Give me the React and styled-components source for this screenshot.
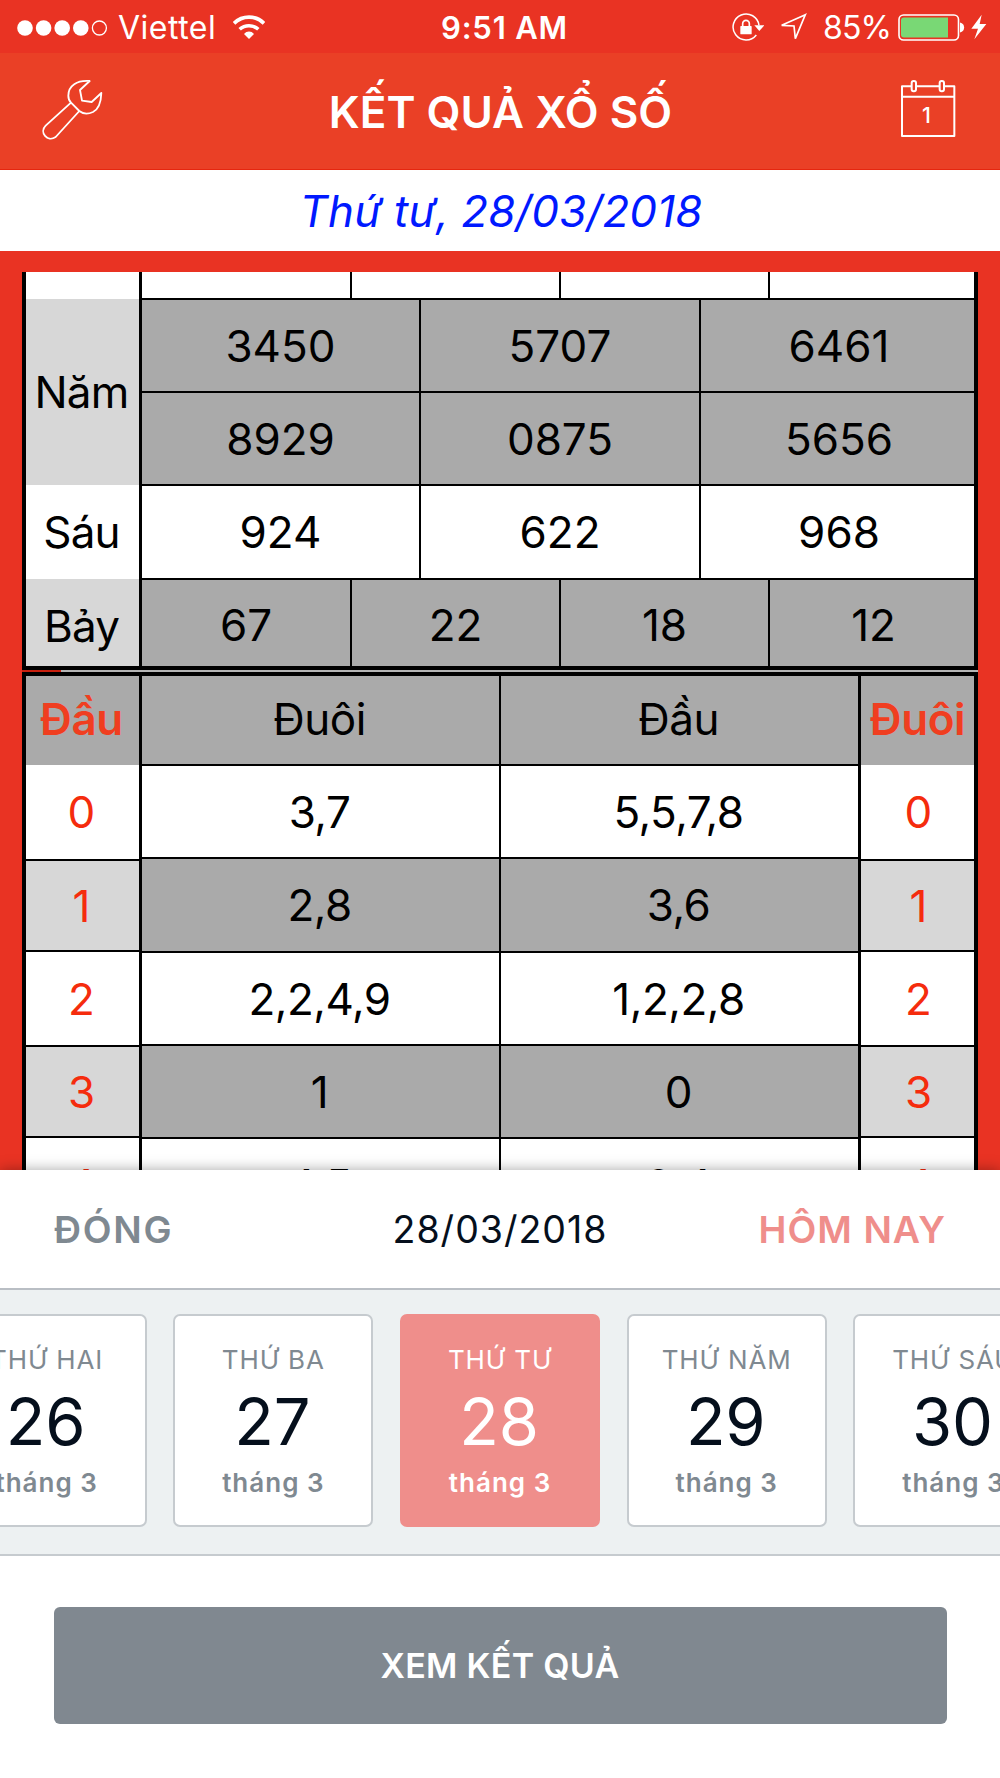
import React from "react";
import styled, { createGlobalStyle } from "styled-components";

const GlobalStyle = createGlobalStyle`
  * {
    box-sizing: border-box;
  }
  body {
    margin: 0;
    background-color: white;
    font-family: Inter, "Noto Sans", sans-serif;
    font-feature-settings: "calt" 0;
  }
`;

const Screen = styled.div`
  width: 1000px;
  height: 1778px;
  overflow: hidden;
  display: flex;
  flex-direction: column;
  background-color: #e93323;
`;

const StatusBar = styled.div`
  height: 53px;
  flex-shrink: 0;
  display: grid;
  grid-template-columns: 1fr auto 1fr;
  align-items: center;
  padding: 2px 13px 0 17px;
  font-size: 32px;
  line-height: 1;
  color: white;
  background-color: #e93323;
`;

const StatusGroup = styled.div`
  display: flex;
  align-items: center;
  justify-content: ${props => props.$align};
`;

const Carrier = styled.span`
  margin: 0 17px 0 10px;
  font-weight: 380;
  letter-spacing: 0.5px;
`;

const Time = styled.span`
  margin-left: 5px;
  font-size: 31px;
  font-weight: 600;
  letter-spacing: 0.8px;
`;

const Percent = styled.span`
  margin: 0 7px 0 16px;
  font-weight: 380;
  letter-spacing: -0.9px;
`;

const Icon = styled.svg`
  display: block;
  flex-shrink: 0;
  margin-left: ${props => props.$left || 0}px;
  margin-bottom: ${props => props.$bottom || 0}px;
`;

const NavBar = styled.div`
  height: 117px;
  flex-shrink: 0;
  display: flex;
  align-items: center;
  justify-content: space-between;
  padding: 0 44px 0 40px;
  color: white;
  background-color: #ea4026;
  border-bottom: 1px solid #e6260f;
`;

const Title = styled.h1`
  margin: 2px 3px 0 0;
  font-size: 44px;
  font-weight: 600;
  line-height: 1;
`;

const DateBar = styled.div`
  height: 81px;
  flex-shrink: 0;
  display: flex;
  align-items: center;
  justify-content: center;
  padding-left: 2px;
  font-size: 44px;
  font-style: italic;
  font-weight: 380;
  letter-spacing: 0.1px;
  color: #0019ff;
  background-color: white;
`;

const Results = styled.div`
  height: 919px;
  flex-shrink: 0;
  overflow: hidden;
  padding: 21px 22px 0;
  font-size: 44px;
  line-height: 1;
  color: black;
`;

const Prizes = styled.div`
  height: 398px;
  display: grid;
  grid-template-columns: 116px 1fr;
  border: solid black;
  border-width: 0 4px 4px;
`;

const Divider = styled.div`
  height: 2px;
  background-color: #b4b4b4;
  border-left: 39px solid #c8200f;
`;

const Heads = styled.div`
  height: 600px;
  display: grid;
  grid-template-columns: 116px 1fr 113px;
  border: 4px solid black;
`;

const Column = styled.div`
  display: flex;
  flex-direction: column;
  border-right: ${props => (props.$line ? "3px solid black" : "none")};
`;

const Label = styled.div`
  height: ${props => props.$height}px;
  flex-shrink: 0;
  display: flex;
  align-items: center;
  justify-content: center;
  letter-spacing: -0.8px;
  padding-top: ${props => props.$drop || 0}px;
  padding-right: 2px;
  background-color: ${props => (props.$shaded ? "#d7d7d7" : "white")};
`;

const Row = styled.div`
  height: ${props => props.$height}px;
  flex-shrink: 0;
  display: grid;
  grid-template-columns: ${props => props.$columns};
  border-top: ${props => (props.$first ? "none" : "2px solid black")};
  background-color: ${props => (props.$shaded ? "#aaaaaa" : "white")};
`;

const Cell = styled.div`
  display: flex;
  align-items: center;
  justify-content: center;
  padding-top: ${props => props.$drop || 0}px;
  padding-bottom: ${props => props.$lift || 0}px;
  border-right: 2px solid black;
  &:last-child {
    border-right: none;
  }
`;

const PrizeCell = styled(Cell)`
  &:last-child {
    padding-left: 3px;
  }
`;

const HeadCell = styled(Cell)`
  padding-right: 2px;
  letter-spacing: -0.5px;
`;

const SideHead = styled.div`
  height: 89px;
  flex-shrink: 0;
  display: flex;
  align-items: center;
  justify-content: center;
  padding-bottom: 4px;
  padding-right: ${props => props.$nudge}px;
  font-weight: 600;
  letter-spacing: -0.4px;
  color: #f03e20;
  background-color: #aaaaaa;
`;

const SideCell = styled.div`
  height: ${props => props.$height}px;
  flex-shrink: 0;
  display: flex;
  align-items: center;
  justify-content: center;
  padding-right: ${props => props.$nudge}px;
  padding-left: ${props => (props.$nudge ? 0 : 2)}px;
  color: #f52c0d;
  border-top: ${props => (props.$first ? "none" : "2px solid black")};
  background-color: ${props => (props.$shaded ? "#d7d7d7" : "white")};
`;

const Sheet = styled.div`
  position: relative;
  height: 608px;
  flex-shrink: 0;
  background-color: white;
  box-shadow: 0 0 13px rgba(0, 0, 0, 0.35);
`;

const SheetHeader = styled.div`
  height: 118px;
  display: grid;
  grid-template-columns: 1fr auto 1fr;
  align-items: center;
  padding: 2px 54px 0 54px;
  font-size: 37.5px;
  line-height: 1;
`;

const TextButton = styled.button`
  all: unset;
  font-weight: 600;
  letter-spacing: ${props => props.$spacing}px;
  text-align: ${props => props.$align};
  color: ${props => props.$color};
`;

const SheetDate = styled.span`
  letter-spacing: 1px;
  color: #050f1c;
`;

const DayStrip = styled.div`
  height: 268px;
  display: flex;
  justify-content: center;
  gap: 26.7px;
  padding-top: 24px;
  overflow: hidden;
  background-color: #edf1f2;
  border-top: 2px solid #b9bec4;
  border-bottom: 2px solid #c6cbcf;
`;

const DayCard = styled.div`
  width: 200px;
  height: 213px;
  flex-shrink: 0;
  display: flex;
  flex-direction: column;
  align-items: center;
  padding-top: 31px;
  line-height: 1;
  border-radius: 7px;
  border: 2px solid ${props => (props.$active ? "#ef8e8b" : "#c6cbcf")};
  background-color: ${props => (props.$active ? "#ef8e8b" : "white")};
  color: ${props => (props.$active ? "white" : "#7f8991")};
`;

const Weekday = styled.span`
  font-size: 26px;
  font-weight: 380;
  letter-spacing: 0.9px;
  white-space: nowrap;
`;

const DayNumber = styled.span`
  margin: 16px 2px 0 0;
  font-size: 65px;
  letter-spacing: -0.2px;
  color: ${props => (props.$active ? "white" : "#050f1c")};
`;

const Month = styled.span`
  margin-top: 16px;
  font-size: 26px;
  font-weight: 600;
  letter-spacing: 1px;
`;

const SubmitButton = styled.button`
  all: unset;
  display: flex;
  align-items: center;
  justify-content: center;
  width: 893px;
  height: 117px;
  margin: 51px auto 0;
  border-radius: 6px;
  font-size: 34px;
  font-weight: 580;
  letter-spacing: 0.3px;
  color: white;
  background-color: #808890;
`;

const prizeLabels = [
  { text: "", height: 27 },
  { text: "Năm", height: 186, shaded: true },
  { text: "Sáu", height: 94 },
  { text: "Bảy", height: 87, shaded: true, drop: 6 }
];

const thirds = "279px 280px 1fr";
const quarters = "210px 209px 209px 1fr";

const prizeRows = [
  { cells: ["", "", "", ""], height: 26, columns: quarters, first: true },
  { cells: ["3450", "5707", "6461"], height: 93, columns: thirds, shaded: true },
  { cells: ["8929", "0875", "5656"], height: 93, columns: thirds, shaded: true },
  { cells: ["924", "622", "968"], height: 94, columns: thirds },
  {
    cells: ["67", "22", "18", "12"],
    height: 88,
    columns: quarters,
    shaded: true,
    drop: 4
  }
];

const headRows = [
  { cells: ["Đuôi", "Đầu"], height: 88, shaded: true, first: true, lift: 3 },
  { cells: ["3,7", "5,5,7,8"], height: 93 },
  { cells: ["2,8", "3,6"], height: 94, shaded: true },
  { cells: ["2,2,4,9", "1,2,2,8"], height: 93 },
  { cells: ["1", "0"], height: 93, shaded: true },
  { cells: ["4,5", "2,4"], height: 94 }
];

const sideHeights = [94, 91, 95, 91, 96];

const days = [
  { weekday: "THỨ HAI", day: 26 },
  { weekday: "THỨ BA", day: 27 },
  { weekday: "THỨ TƯ", day: 28, active: true },
  { weekday: "THỨ NĂM", day: 29 },
  { weekday: "THỨ SÁU", day: 30 }
];

const Signal = () => (
  <Icon width="91" height="18" viewBox="0 0 91 18" fill="white">
    <circle cx="8" cy="9" r="7.8" />
    <circle cx="26.6" cy="9" r="7.8" />
    <circle cx="45.2" cy="9" r="7.8" />
    <circle cx="63.8" cy="9" r="7.8" />
    <circle cx="82.4" cy="9" r="7" fill="none" stroke="white" strokeWidth="1.3" />
  </Icon>
);

const Wifi = () => (
  <Icon $bottom={2} width="32" height="26" viewBox="690 41 96 78" fill="none" stroke="white">
    <path d="M693 69a64 64 0 0 1 90 0" strokeWidth="11" />
    <path d="M710 87a41 41 0 0 1 56 0" strokeWidth="10.5" />
    <path d="M738 116l-15-15c8-10 22-10 30 0z" fill="white" stroke="none" />
  </Icon>
);

const RotationLock = () => (
  <Icon $bottom={1} width="32" height="28" viewBox="701 38 96 84" fill="none" stroke="white">
    <path d="M774 104A39 39 0 1 1 782 75" strokeWidth="4.5" />
    <path d="M768 75h30l-15 17z" fill="white" stroke="none" />
    <rect x="726" y="77" width="34" height="25" rx="2" fill="white" stroke="none" />
    <path d="M733 78v-8a10 10 0 0 1 20 0v8" strokeWidth="5" />
  </Icon>
);

const Location = () => (
  <Icon $left={16} $bottom={1} width="27" height="28" viewBox="845 38 81 84">
    <path
      d="M921 43L850 75l37 2 4 38z"
      fill="none"
      stroke="white"
      strokeWidth="5"
      strokeLinejoin="miter"
    />
  </Icon>
);

const Battery = () => (
  <Icon width="67" height="27" viewBox="0 0 67 27">
    <rect x="1" y="1" width="59.5" height="25" rx="4.5" fill="none" stroke="white" strokeWidth="1.6" />
    <path d="M6 3.5h44v20H6a3 3 0 0 1-3-3v-14a3 3 0 0 1 3-3z" fill="#79d875" />
    <path d="M62 8.500c5.500 1 5.500 9 0 10z" fill="white" />
  </Icon>
);

const Bolt = () => (
  <Icon $left={6} $bottom={1} width="16" height="26" viewBox="1414 42 48 78">
    <path d="M1446 44l-31 42h20l-11 32 36-46h-20z" fill="white" />
  </Icon>
);

const Wrench = () => (
  <Icon $bottom={3} width="64" height="64" viewBox="120 232 192 192">
    <path
      d="M269 241c-38-3-64 14-64 44 0 9 2 15 8 21l-76 69c-20 20 5 51 30 34l71-78c11 9 26 10 41 3 18-9 24-27 25-57l-29 27-29-4-6-32z M213 306l25 25"
      fill="none"
      stroke="white"
      strokeWidth="5.5"
      strokeLinejoin="round"
    />
  </Icon>
);

const Calendar = () => (
  <Icon
    $bottom={4}
    width="56"
    height="60"
    viewBox="1200 236 168 180"
    fill="none"
    stroke="white"
  >
    <path
      d="M1235 258h-29v149h157V258h-31M1248 258h71M1206 289h157"
      strokeWidth="6"
      strokeLinejoin="round"
    />
    <rect x="1235" y="242" width="13" height="31" rx="6" strokeWidth="6" />
    <rect x="1319" y="242" width="13" height="31" rx="6" strokeWidth="6" />
    <text
      x="1279"
      y="367"
      textAnchor="middle"
      fontSize="64"
      fontWeight="500"
      fill="white"
      stroke="none"
    >
      1
    </text>
  </Icon>
);

const Side = ({ title, line, nudge = 0 }) => (
  <Column $line={line}>
    <SideHead $nudge={nudge}>{title}</SideHead>
    {sideHeights.map((height, i) => (
      <SideCell
        key={i}
        $height={height}
        $first={i === 0}
        $shaded={i % 2 === 1}
        $nudge={nudge}
      >
        {i}
      </SideCell>
    ))}
  </Column>
);

const App = () => {
  return (
    <Screen>
      <GlobalStyle />
      <StatusBar>
        <StatusGroup $align="flex-start">
          <Signal />
          <Carrier>Viettel</Carrier>
          <Wifi />
        </StatusGroup>
        <Time>9:51 AM</Time>
        <StatusGroup $align="flex-end">
          <RotationLock />
          <Location />
          <Percent>85%</Percent>
          <Battery />
          <Bolt />
        </StatusGroup>
      </StatusBar>
      <NavBar>
        <Wrench />
        <Title>KẾT QUẢ XỔ SỐ</Title>
        <Calendar />
      </NavBar>
      <DateBar>Thứ tư, 28/03/2018</DateBar>
      <Results>
        <Prizes>
          <Column $line>
            {prizeLabels.map(label => (
              <Label
                key={label.text}
                $height={label.height}
                $shaded={label.shaded}
                $drop={label.drop}
              >
                {label.text}
              </Label>
            ))}
          </Column>
          <Column>
            {prizeRows.map((row, i) => (
              <Row
                key={i}
                $height={row.height}
                $columns={row.columns}
                $shaded={row.shaded}
                $first={row.first}
              >
                {row.cells.map((cell, j) => (
                  <PrizeCell key={j} $drop={row.drop}>
                    {cell}
                  </PrizeCell>
                ))}
              </Row>
            ))}
          </Column>
        </Prizes>
        <Divider />
        <Heads>
          <Side title="Đầu" line nudge={2} />
          <Column $line>
            {headRows.map((row, i) => (
              <Row
                key={i}
                $height={row.height}
                $columns="359px 1fr"
                $shaded={row.shaded}
                $first={row.first}
              >
                {row.cells.map((cell, j) => (
                  <HeadCell key={j} $lift={row.lift}>
                    {cell}
                  </HeadCell>
                ))}
              </Row>
            ))}
          </Column>
          <Side title="Đuôi" />
        </Heads>
      </Results>
      <Sheet>
        <SheetHeader>
          <TextButton $align="left" $color="#7f8991" $spacing={1.7}>
            ĐÓNG
          </TextButton>
          <SheetDate>28/03/2018</SheetDate>
          <TextButton $align="right" $color="#ef8e8b" $spacing={1}>
            HÔM NAY
          </TextButton>
        </SheetHeader>
        <DayStrip>
          {days.map(item => (
            <DayCard key={item.day} $active={item.active}>
              <Weekday>{item.weekday}</Weekday>
              <DayNumber $active={item.active}>{item.day}</DayNumber>
              <Month>tháng 3</Month>
            </DayCard>
          ))}
        </DayStrip>
        <SubmitButton>XEM KẾT QUẢ</SubmitButton>
      </Sheet>
    </Screen>
  );
};

export default App;
